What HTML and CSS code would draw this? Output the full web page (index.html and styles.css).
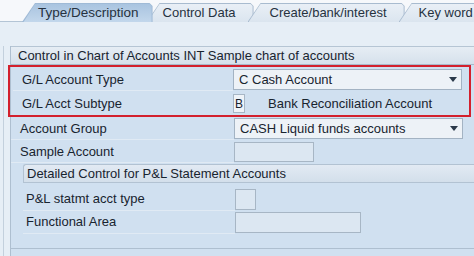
FILE: index.html
```html
<!DOCTYPE html>
<html lang="en">
<head>
  <meta charset="UTF-8" />
  <title>Change G/L Account - Type/Description</title>
  <link rel="stylesheet" href="styles.css">
</head>
<body>
<div class="screen">
  <div class="tabstrip">
    <div class="tab active">Type/Description</div>
    <div class="tab">Control Data</div>
    <div class="tab">Create/bank/interest</div>
    <div class="tab">Key word</div>
  </div>

  <div class="page">
    <div class="frame">
      <div class="group">
        <div class="group-title">Control in Chart of Accounts INT Sample chart of accounts</div>
        <div class="group-body">
          <div class="highlight">
            <div class="row">
              <span class="label">G/L Account Type</span>
              <div class="dropdown"><span>C Cash Account</span><span class="arrow"></span></div>
            </div>
            <div class="row">
              <span class="label">G/L Acct Subtype</span>
              <div class="field tiny">B</div>
              <span class="desc">Bank Reconciliation Account</span>
            </div>
          </div>
          <div class="row first">
            <span class="label">Account Group</span>
            <div class="dropdown"><span>CASH Liquid funds accounts</span><span class="arrow"></span></div>
          </div>
          <div class="row short-row">
            <span class="label">Sample Account</span>
            <div class="field short"></div>
          </div>

          <div class="subgroup">
            <div class="sub-title">Detailed Control for P&amp;L Statement Accounts</div>
            <div class="sub-rows">
              <div class="row sub">
                <span class="label">P&amp;L statmt acct type</span>
                <div class="field box"></div>
              </div>
              <div class="row sub">
                <span class="label">Functional Area</span>
                <div class="field medium"></div>
              </div>
            </div>
          </div>
        </div>
      </div>
    </div>
  </div>
</div>
</body>
</html>
```

FILE: styles.css
```css
body {
  margin: 0;
  font-family: 'Liberation Sans', Arial, sans-serif;
  font-size: 13px;
  color: #18242f;
  background: #f6f8fb;
  overflow: hidden;
}
.screen {
  width: 474px;
  height: 256px;
  overflow: hidden;
}

/* tabs */
.tabstrip {
  display: flex;
  height: 22px;
  padding-left: 22px;
  border-bottom: 1px solid #b3c4d5;
  box-sizing: border-box;
}
.tab {
  position: relative;
  margin-top: 3px;
  height: 19px;
  line-height: 20px;
  padding: 0 14px 0 16px;
  margin-right: -6px;
  white-space: nowrap;
  background: #a8bbcf;
  clip-path: polygon(13px 0, calc(100% - 3px) 0, 100% 3px, 100% 100%, 0 100%);
  color: #26323f;
}
.tab::before {
  content: "";
  position: absolute;
  inset: 1px 1px 0 1px;
  z-index: -1;
  background: linear-gradient(#e9eff6, #dbe5ef);
  clip-path: polygon(12px 0, calc(100% - 2px) 0, 100% 2px, 100% 100%, 0 100%);
}
.tab.active {
  background: #9fbad6;
  font-size: 13.5px;
  z-index: 2;
}
.tab.active::before {
  bottom: -1px;
  background: linear-gradient(#a9c4e0, #c4d8ec);
}
.tab:nth-child(2) { padding-right: 18px; }
.tab:nth-child(3) { padding-left: 22px; padding-right: 18px; }
.tab:nth-child(4) { padding-left: 20px; }

/* page */
.page {
  background: #e6eef6;
  padding: 24px 0 0 3px;
  height: 234px;
  box-sizing: border-box;
}
.frame {
  border-left: 1px solid #c3d0dd;
  padding-left: 6px;
  height: 100%;
}
.group {
  border-left: 1px solid #aebfd0;
  height: 100%;
  box-sizing: border-box;
}
.group-title {
  height: 17px;
  line-height: 17px;
  padding-left: 7px;
  background: linear-gradient(#e6edf4, #d6e1ec);
  border-top: 1px solid #b6c5d4;
  border-bottom: 1px solid #a9bacb;
  white-space: nowrap;
}
.group-body {
  background: #d0e0f0;
  height: 221px;
}

.highlight {
  border: 2px solid #d3202d;
  margin: 0 3px 0 -3px;
  padding-left: 3px;
}

.row {
  display: flex;
  align-items: center;
  height: 24px;
}
.row.first { margin-top: -1px; }
.row.short-row { height: 23px; }
.label {
  width: 214px;
  padding-left: 9px;
  flex: none;
  height: 22px;
  line-height: 23px;
  border-bottom: 1px solid #e0eaf4;
}
.highlight .label { width: 211px; }
.highlight .row:last-child .label { border-bottom: none; }

.dropdown {
  width: 222px;
  height: 19px;
  line-height: 19px;
  padding-left: 5px;
  background: #edf2f7;
  border: 1px solid #a3b3c3;
  display: flex;
  justify-content: space-between;
  align-items: center;
}
.arrow {
  width: 0;
  height: 0;
  margin-right: 4px;
  border-left: 4px solid transparent;
  border-right: 4px solid transparent;
  border-top: 5px solid #2b3a4a;
}
.field {
  height: 18px;
  line-height: 18px;
  background: #dce7f2;
  border: 1px solid #a7b6c5;
  box-sizing: border-box;
}
.field.tiny {
  width: 12px;
  height: 19px;
  padding-left: 1px;
  font-size: 12px;
  background: #eef3f8;
}
.field.short { width: 80px; height: 20px; }
.field.box { width: 21px; height: 21px; }
.field.medium { width: 126px; height: 21px; }
.desc { margin-left: 23px; }

/* detailed control */
.subgroup {
  margin-top: 1px;
  border-bottom: 1px solid #aebfd0;
  padding-bottom: 14px;
  margin-left: -1px;
}
.sub-title {
  margin-left: 13px;
  height: 17px;
  line-height: 17px;
  padding-left: 3px;
  background: linear-gradient(#e2eaf3, #d3dfeb);
  border: 1px solid #b2c2d2;
  border-right: none;
  border-radius: 3px 0 0 0;
  white-space: nowrap;
}
.sub-rows { padding-top: 5px; }
.row.sub { height: 23px; margin-left: 13px; }
.row.sub .label { width: 209px; padding-left: 3px; height: 22px; line-height: 22px; }
```
